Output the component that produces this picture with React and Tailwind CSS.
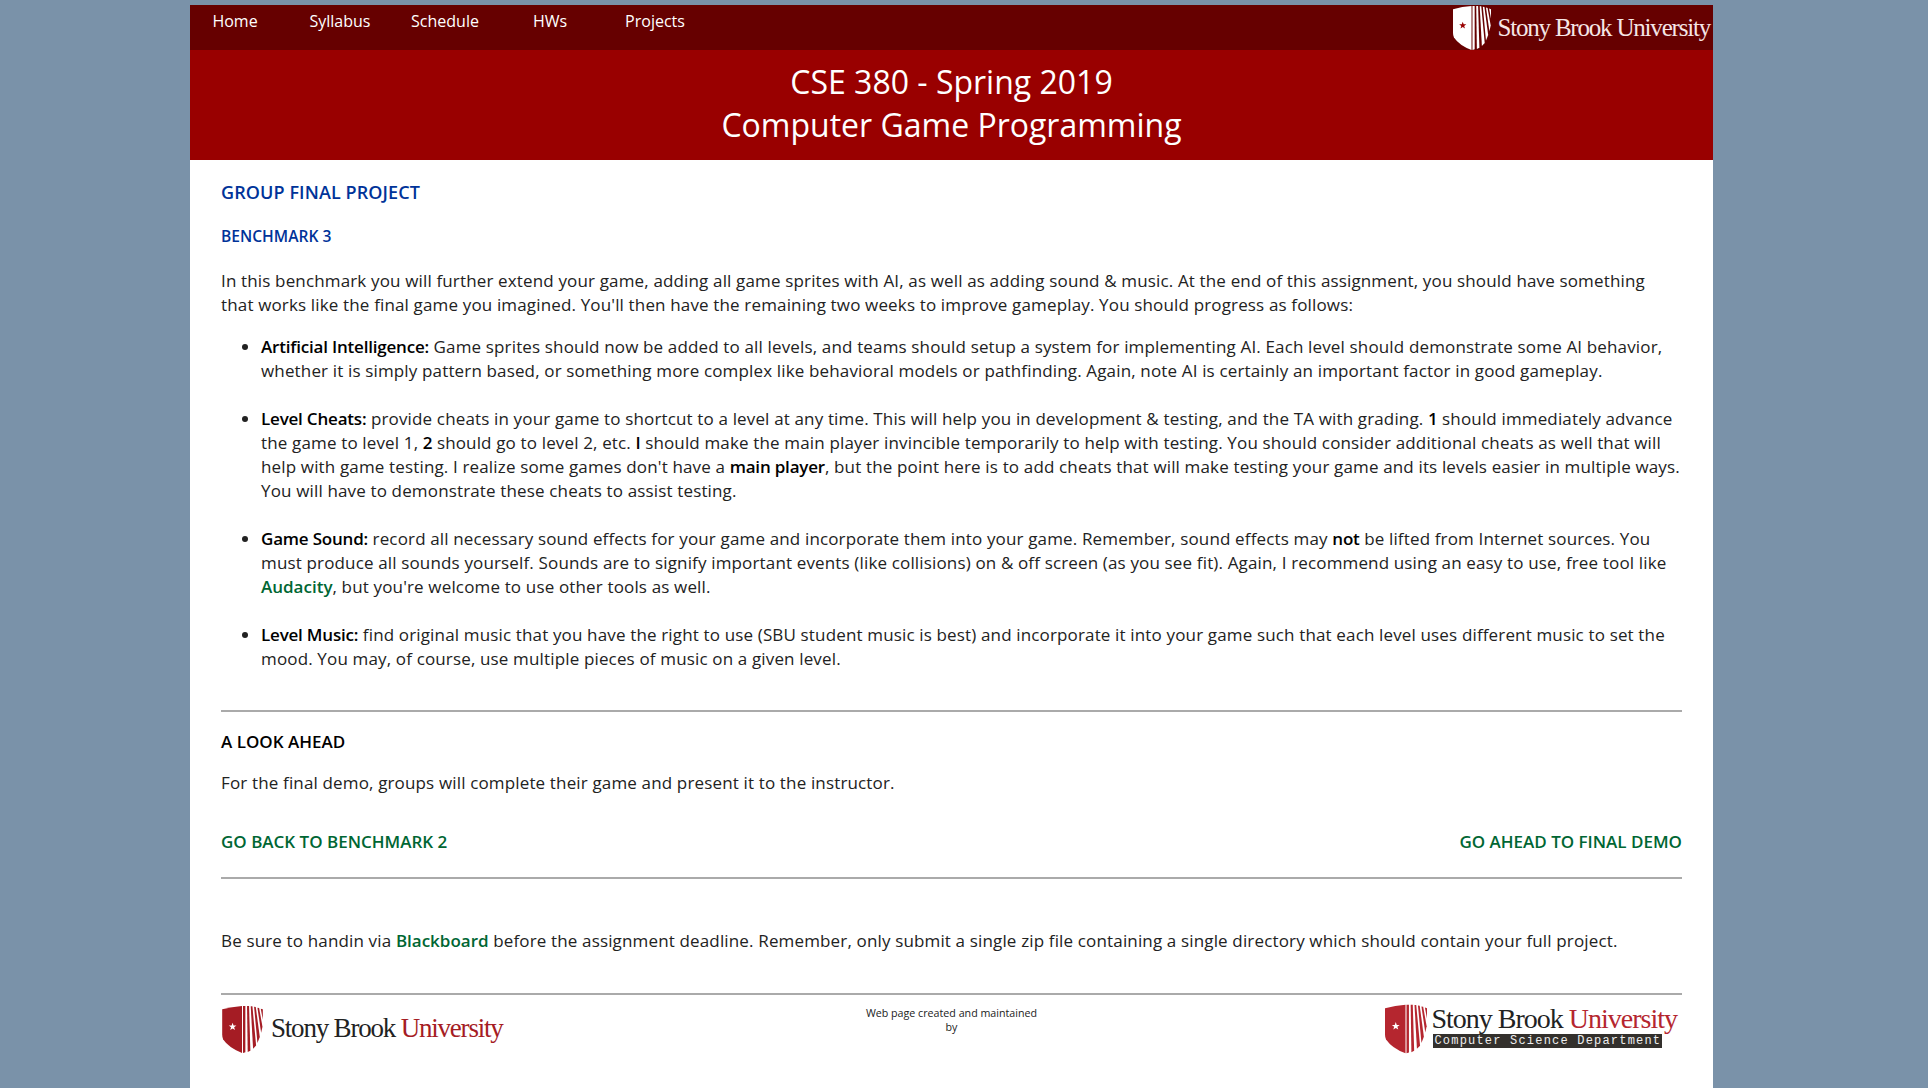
// App.jsx — CSE 380 benchmark page
const STAR = "0,-12 2.9,-3.8 11.4,-3.7 4.6,1.4 7.1,9.7 0,4.8 -7.1,9.7 -4.6,1.4 -11.4,-3.7 -2.9,-3.8";

function Shield({ fill, star, className }) {
  return (
    <svg viewBox="0 0 121 140" className={className}>
      <path d="M0 10Q30 2 59 0V140Q20 125 3 100Q0 94 0 85Z" fill={fill} />
      <polygon points="62,0 69,0 69,138 62,140" fill={fill} />
      <polygon points="74,0 80,0 84,133 76,137" fill={fill} />
      <polygon points="85,1 90,1 101,118 92,127" fill={fill} />
      <polygon points="95,2 100,3 112,92 105,110" fill={fill} />
      <polygon points="105,5 110,6 120,62 116,80" fill={fill} />
      <polygon points="115,8 121,10 121,40" fill={fill} />
      <polygon points={STAR} transform="translate(31 62)" fill={star} />
    </svg>
  );
}

function Link({ children }) {
  return <a className="text-[#006633] font-semibold tracking-normal">{children}</a>;
}

function B({ children }) {
  return <b className="font-semibold text-black tracking-[-0.2px]">{children}</b>;
}

const NAV = ["Home", "Syllabus", "Schedule", "HWs", "Projects"];

export default function App() {
  return (
    <div className="min-h-screen h-[1088px] overflow-hidden bg-[#7a92a9] pt-[5px] pl-[190px] font-['Open_Sans',sans-serif] text-[17px] leading-[24px] tracking-[0.15px] text-[#222222]">
      <div className="w-[1523px] h-[1083px] bg-white">
        <nav className="h-[45px] bg-[#660000] flex justify-between text-white text-[16px] tracking-normal">
          <ul className="flex gap-[15px]">
            {NAV.map((item) => (
              <li key={item} className="w-[90px] text-center pt-[4px]">{item}</li>
            ))}
          </ul>
          <div className="flex items-center pr-[3px]">
            <Shield fill="#ffffff" star="#990000" className="w-[38px] h-[44px] shrink-0" />
            <span className="ml-[7px] font-['Liberation_Serif',serif] text-[25px] tracking-[-1.2px] text-[#f5e6e6] whitespace-nowrap">Stony Brook University</span>
          </div>
        </nav>
        <header className="h-[110px] bg-[#990000] text-white text-center text-[32px] leading-[43px] pt-[10px] tracking-normal">
          <div>CSE 380 - Spring 2019</div>
          <div>Computer Game Programming</div>
        </header>

        <main className="px-[31px]">
          <h1 className="mt-[20px] text-[18px] leading-[24px] font-semibold text-[#003399] tracking-[0.1px]">GROUP FINAL PROJECT</h1>
          <h2 className="mt-[20px] text-[15.6px] leading-[24px] font-semibold text-[#003399] tracking-normal">BENCHMARK 3</h2>
          <p className="mt-[21px] pr-[10px]">
            In this benchmark you will further extend your game, adding all game sprites with AI, as well as adding sound &amp; music. At the end of this assignment, you should have something that works like the final game you imagined. You'll then have the remaining two weeks to improve gameplay. You should progress as follows:
          </p>
          <ul className="mt-[18px] pl-[40px] list-disc flex flex-col gap-[24px]">
            <li>
              <B>Artificial Intelligence:</B> Game sprites should now be added to all levels, and teams should setup a system for implementing AI. Each level should demonstrate some AI behavior, whether it is simply pattern based, or something more complex like behavioral models or pathfinding. Again, note AI is certainly an important factor in good gameplay.
            </li>
            <li>
              <B>Level Cheats:</B> provide cheats in your game to shortcut to a level at any time. This will help you in development &amp; testing, and the TA with grading. <B>1</B> should immediately advance the game to level 1, <B>2</B> should go to level 2, etc. <B>I</B> should make the main player invincible temporarily to help with testing. You should consider additional cheats as well that will help with game testing. I realize some games don't have a <B>main player</B>, but the point here is to add cheats that will make testing your game and its levels easier in multiple ways. You will have to demonstrate these cheats to assist testing.
            </li>
            <li>
              <B>Game Sound:</B> record all necessary sound effects for your game and incorporate them into your game. Remember, sound effects may <B>not</B> be lifted from Internet sources. You must produce all sounds yourself. Sounds are to signify important events (like collisions) on &amp; off screen (as you see fit). Again, I recommend using an easy to use, free tool like <Link>Audacity</Link>, but you're welcome to use other tools as well.
            </li>
            <li>
              <B>Level Music:</B> find original music that you have the right to use (SBU student music is best) and incorporate it into your game such that each level uses different music to set the mood. You may, of course, use multiple pieces of music on a given level.
            </li>
          </ul>

          <hr className="mt-[39px] border-t-2 border-[#aaaaaa]" />
          <h3 className="mt-[18px] font-semibold text-black tracking-normal">A LOOK AHEAD</h3>
          <p className="mt-[17px]">For the final demo, groups will complete their game and present it to the instructor.</p>
          <div className="mt-[35px] flex justify-between">
            <Link>GO BACK TO BENCHMARK 2</Link>
            <Link>GO AHEAD TO FINAL DEMO</Link>
          </div>
          <hr className="mt-[23px] border-t-2 border-[#aaaaaa]" />
          <p className="mt-[50px]">
            Be sure to handin via <Link>Blackboard</Link> before the assignment deadline. Remember, only submit a single zip file containing a single directory which should contain your full project.
          </p>
          <hr className="mt-[40px] border-t-2 border-[#aaaaaa]" />

          <footer className="mt-[9px] grid grid-cols-3 tracking-normal">
            <div className="flex items-center h-[50px] pl-[1px]">
              <Shield fill="#a51c24" star="#ffffff" className="w-[41px] h-[47px] shrink-0" />
              <span className="ml-[8px] -mt-[2px] font-['Liberation_Serif',serif] text-[27px] tracking-[-1.2px] text-[#222222] whitespace-nowrap">
                Stony Brook <span className="text-[#a51c24]">University</span>
              </span>
            </div>
            <div className="text-center text-[10.7px] leading-[14px] pt-[2px]">
              <div>Web page created and maintained</div>
              <div>by</div>
            </div>
            <div className="flex justify-end h-[50px] pr-[5px]">
              <Shield fill="#b5262f" star="#ffffff" className="w-[42px] h-[50px] shrink-0" />
              <div className="ml-[4px] -mt-[1px] flex flex-col">
                <span className="font-['Liberation_Serif',serif] text-[28px] leading-[31px] tracking-[-1px] text-[#222222] whitespace-nowrap">
                  Stony Brook <span className="text-[#b5262f]">University</span>
                </span>
                <span className="ml-[2px] bg-[#33302c] text-[#eeeeee] font-['Liberation_Mono',monospace] text-[12px] leading-[14px] w-[229px] pl-[1px] tracking-[1.2px] whitespace-nowrap">Computer Science Department</span>
              </div>
            </div>
          </footer>
        </main>
      </div>
    </div>
  );
}
